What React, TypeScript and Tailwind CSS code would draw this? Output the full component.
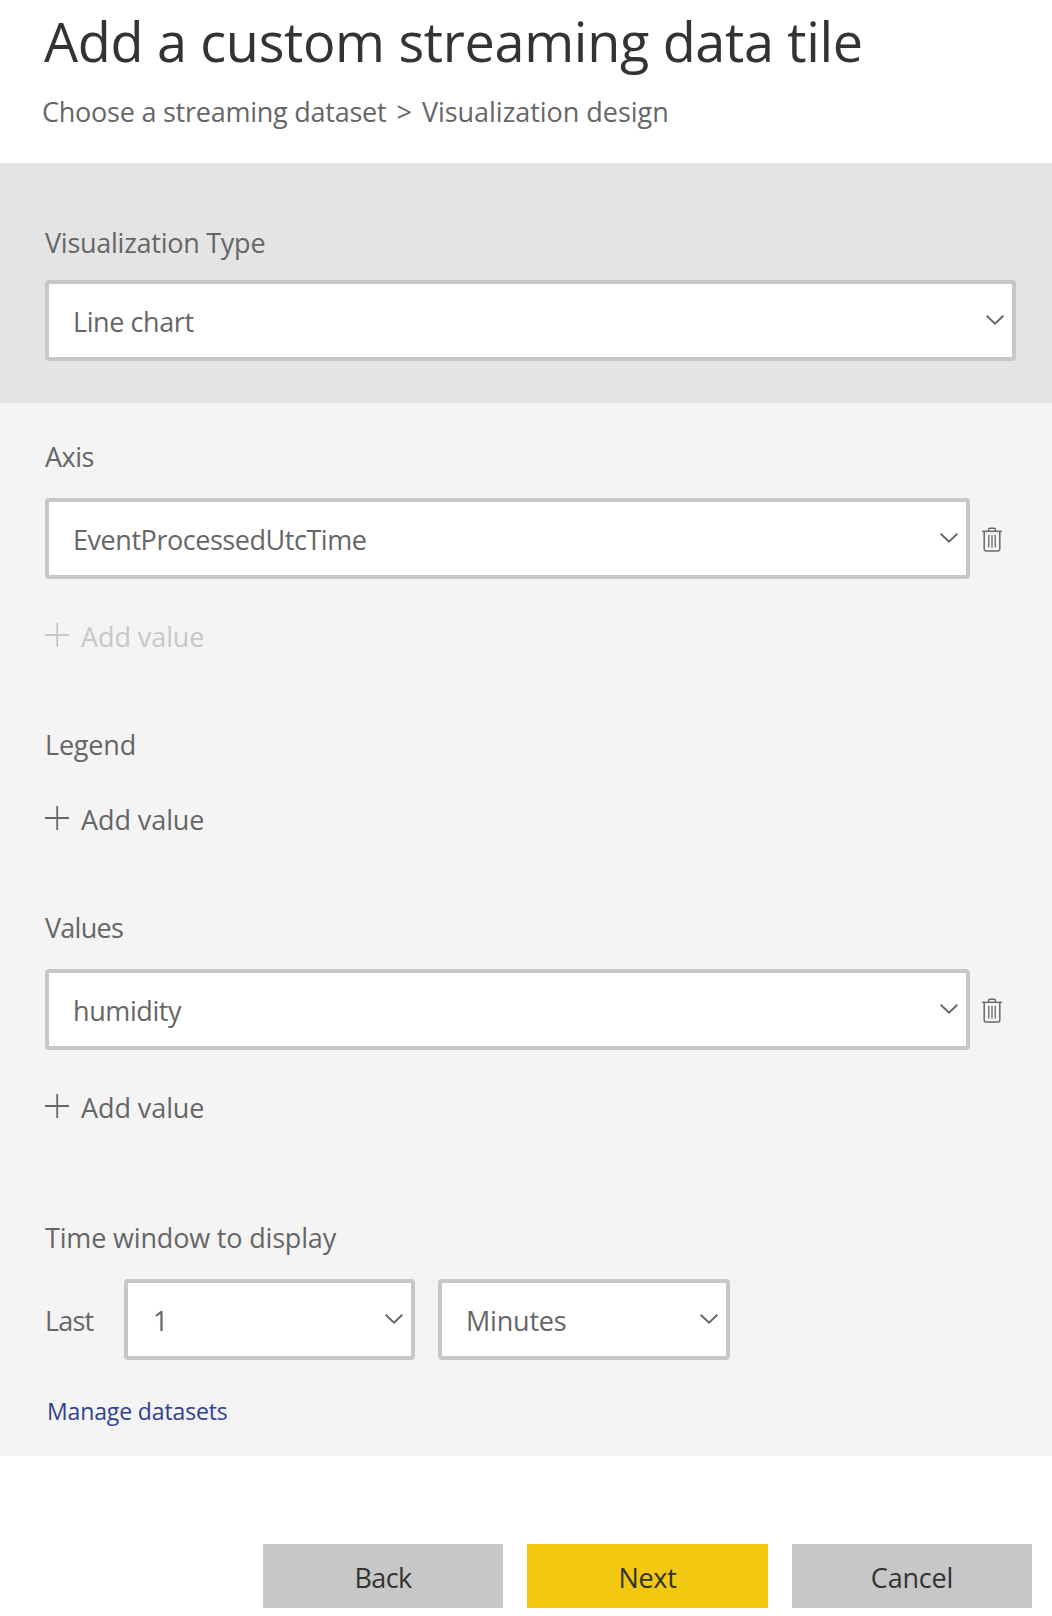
import type { ReactNode } from "react";

function Chevron() {
  return (
    <svg className="mb-px h-[10px] w-[18px] shrink-0" viewBox="0 0 18 10" fill="none" stroke="#666666" strokeWidth="1.9">
      <path d="M0.7 0.8 L9 8.6 L17.3 0.8" />
    </svg>
  );
}

function Plus() {
  return (
    <svg className="-mt-1 h-6 w-6 shrink-0" viewBox="0 0 24 24" fill="none" stroke="currentColor" strokeWidth="1.8">
      <path d="M0 12 H24 M12.2 0 V24" />
    </svg>
  );
}

function Trash() {
  return (
    <svg className="mt-px h-[25px] w-5 shrink-0" viewBox="0 0 20 25" fill="none" stroke="#6a6a6a" strokeWidth="1.5">
      <path d="M0.2 4.3 H19.8" />
      <path d="M6.7 4.2 V2.2 Q6.7 1.2 7.7 1.2 H12.3 Q13.3 1.2 13.3 2.2 V4.2" />
      <path d="M2.2 4.3 V22.3 Q2.2 24 3.9 24 H16.1 Q17.8 24 17.8 22.3 V4.3" />
      <path d="M6.8 8 V20.5 M10 8 V20.5 M13.2 8 V20.5" strokeWidth="1.3" />
    </svg>
  );
}

function Select({ className, children }: { className: string; children: ReactNode }) {
  return (
    <button
      type="button"
      className={`flex h-[81px] items-center justify-between rounded-[4px] border-4 border-[#c7c7c7] bg-white pr-2 pl-6 text-left ${className}`}
    >
      <span className="pt-[3px]">{children}</span>
      <Chevron />
    </button>
  );
}

function AddValue({ className }: { className: string }) {
  return (
    <button type="button" className={`flex h-10 items-center gap-3 tracking-[-0.08px] ${className}`}>
      <Plus />
      <span>Add value</span>
    </button>
  );
}

export default function App() {
  return (
    <div className="flex h-[1616px] w-[1052px] flex-col overflow-hidden bg-white font-['Open_Sans','Noto_Sans',sans-serif] text-[27px] leading-[40px] text-[#666666]">
      <header className="h-[163px] shrink-0 pt-[3px]">
        <h1 className="pl-11 text-[54px] leading-[76px] tracking-[-0.33px] text-[#333333]">
          Add a custom streaming data tile
        </h1>
        <p className="mt-[13px] pl-[42px]">
          <span className="tracking-[-0.24px]">Choose a streaming dataset</span>
          <span className="px-[3px]"> &gt; </span>
          <span className="tracking-[-0.03px]">Visualization design</span>
        </p>
      </header>

      <section className="h-60 shrink-0 bg-[#e4e4e4] px-[45px] pt-[60px]">
        <h2 className="tracking-[-0.26px]">Visualization Type</h2>
        <Select className="mt-[17px] w-[971px] tracking-[-0.42px]">Line chart</Select>
      </section>

      <main className="flex h-[1053px] shrink-0 flex-col items-start bg-[#f4f4f4] pt-[34px] pl-[45px]">
        <h2 className="tracking-[-0.5px]">Axis</h2>
        <div className="mt-[21px] flex items-center gap-3">
          <Select className="w-[925px] tracking-[-0.45px]">EventProcessedUtcTime</Select>
          <Trash />
        </div>
        <AddValue className="mt-[38px] text-[#c8c8c8]" />

        <h2 className="mt-[68px] tracking-[-0.2px]">Legend</h2>
        <AddValue className="mt-[35px]" />

        <h2 className="mt-[68px] tracking-[-0.75px]">Values</h2>
        <div className="mt-[21px] flex items-center gap-3">
          <Select className="w-[925px] tracking-[-0.4px]">humidity</Select>
          <Trash />
        </div>
        <AddValue className="mt-[38px]" />

        <h2 className="mt-[90px] tracking-[-0.17px]">Time window to display</h2>
        <div className="mt-[21px] flex items-center">
          <span className="w-[79px] pt-[3px] tracking-[-0.8px]">Last</span>
          <Select className="w-[291px] indent-px">1</Select>
          <Select className="ml-[23px] w-[292px] tracking-[-0.2px]">Minutes</Select>
        </div>
        <a href="#" className="mt-[34px] ml-0.5 text-[23px] leading-[34px] tracking-[-0.13px] text-[#2f4190]">
          Manage datasets
        </a>
      </main>

      <footer className="mt-[88px] flex justify-end gap-6 pr-5 text-[#333333]">
        <button type="button" className="h-16 w-60 bg-[#c7c7c7] pt-[3px] tracking-[-0.7px]">Back</button>
        <button type="button" className="h-16 w-[241px] bg-[#f2c811] pt-[3px] tracking-[-0.3px]">Next</button>
        <button type="button" className="h-16 w-60 bg-[#c7c7c7] pt-[3px] tracking-[-0.2px]">Cancel</button>
      </footer>
    </div>
  );
}
